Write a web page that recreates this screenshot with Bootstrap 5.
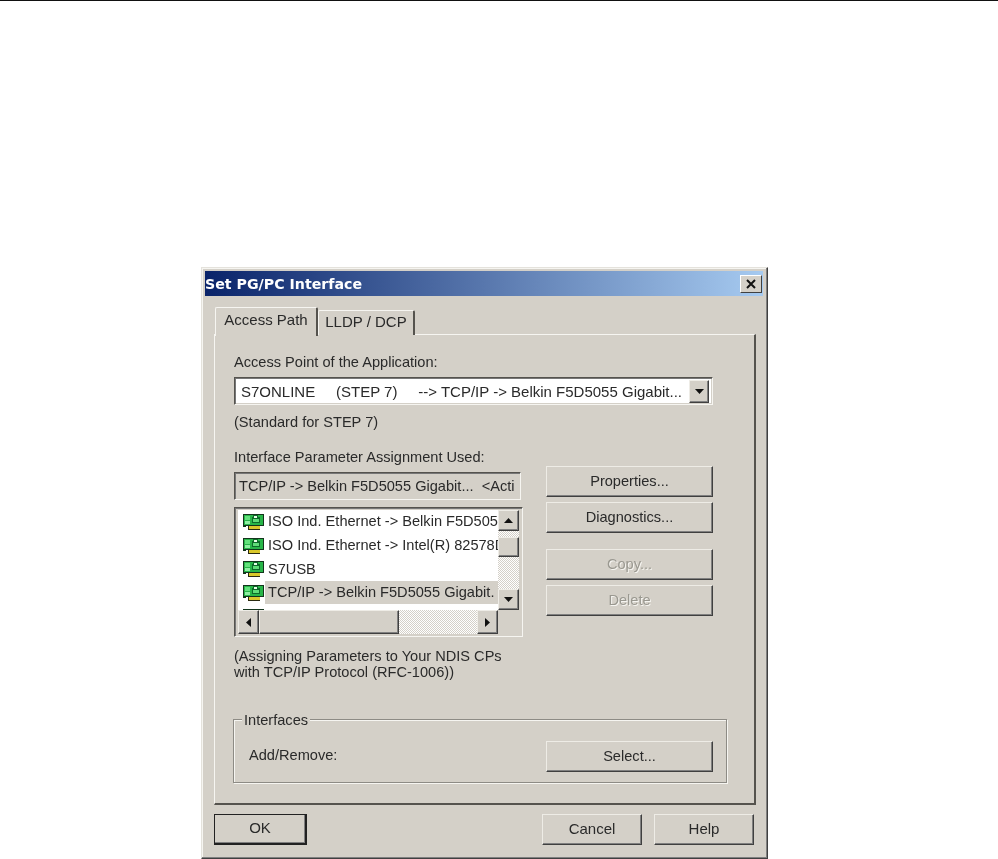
<!DOCTYPE html>
<html lang="en">
<head>
<meta charset="utf-8">
<title>Set PG/PC Interface</title>
<link rel="stylesheet" href="https://cdn.jsdelivr.net/npm/bootstrap@5.3.0/dist/css/bootstrap.min.css">
<style>
html,body{background:#fff;height:859px;overflow:hidden}
body{font-family:"Liberation Sans",Arial,sans-serif;font-size:14.6px;line-height:16px;color:#2a2a2a}
.topline{height:1px;background:#111}
.dlg{width:567px;height:592px;margin:266px 0 0 201px;background:#d4d0c8;border:1px solid #e4e2dc;border-right-color:#404040;border-bottom-color:#404040;box-shadow:inset -1px -1px 0 #808080,inset 1px 1px 0 #f6f5f1;padding:3px 3px 0 3px;filter:blur(.4px)}
.ttl{height:25px;background:linear-gradient(90deg,#0a246a,#a6caf0);color:#fff;font-weight:700;font-family:"DejaVu Sans",sans-serif;font-size:14.2px;padding-left:0;margin-right:1px}
.xbtn{width:22px;height:18px;margin-right:1px;background:#d4d0c8;color:#111;border-right:1px solid #404040;border-bottom:1px solid #404040;border-top:1px solid #fff;border-left:1px solid #fff}
.body{padding:11px 8px 0 9px}
.tabs{height:27px;padding-left:1px;font-size:15px}
.tb{border:1px solid #f6f5f1;border-bottom:0;border-right:2px solid #55534e;background:#d4d0c8;border-radius:2px 2px 0 0;text-align:center}
.tb1{width:103px;height:29px;padding-top:4px;position:relative;z-index:1}
.tb2{width:97px;height:25px;margin-top:3px;padding-top:3px}
.pane{height:471px;border:1px solid #f6f5f1;border-right:2px solid #55534e;border-bottom:2px solid #55534e;padding:19px 0 0 19px}
.lbl{height:16px;white-space:nowrap}
.gap9{margin-top:9px}
.sunk{border:1px solid #f6f5f1;border-top-color:#55534e;border-left-color:#55534e;box-shadow:inset 1px 1px 0 #777,inset -1px -1px 0 #d4d0c8}
.combo{width:479px;height:28px;margin-top:7px;background:#fff;padding:3px 2px 2px 6px;white-space:pre;font-size:15px}
.arr{width:20px;height:23px;background:#d4d0c8;margin-right:1px;margin-top:-1px}
.rz{border:1px solid #eeece6;border-right-color:#404040;border-bottom-color:#404040;box-shadow:inset -1px -1px 0 #808080;background:#d4d0c8}
.leftcol{width:288px}
.ro{width:287px;height:28px;margin-top:7px;padding-left:4px;overflow:hidden;white-space:pre}
.lst{width:289px;height:130px;margin-top:7px;padding:2px 2px 2px 3px;background:#d4d0c8}
.lst-top{height:100px}
.rows{width:260px;background:#fff;overflow:hidden}
.rw{height:23.7px;white-space:nowrap;overflow:hidden}
.rw svg{flex:none;margin:0 1px 0 5px}
.rw span{padding:0 0 0 3px;line-height:23px}
.rw.sel span{background:#d4d0c8;display:block;flex:1}
.vbar{width:21px;background:#d4d0c8;height:100px}
.sb{width:21px;height:21px;flex:none}
.dither{background-color:#fff;background-image:repeating-conic-gradient(#d4d0c8 0 25%,#fff 0 50%);background-size:2px 2px}
.trk-top{height:6px}
.vthumb{height:20px}
.hbar{height:24px}
.hb{width:21px;height:24px;flex:none}
.hthumb{width:140px}
.fix{width:22px;background:#d4d0c8}
.rightcol{margin-left:24px;width:167px;margin-top:17px}
.wbtn{display:flex;align-items:center;justify-content:center;width:167px;height:31px;padding:0 0 2px 0;background:#d4d0c8;color:#2a2a2a}
.gap5{margin-top:5px}
.gap16{margin-top:16px}
.off{color:#9a9890;text-shadow:1px 1px 0 #f6f5f1}
.notes{margin-top:11px}
.grp{width:494px;height:64px;margin-top:39px;margin-left:-1px;border:1px solid #8d8b85;box-shadow:1px 1px 0 #f6f5f1,inset 1px 1px 0 #f6f5f1;padding:21px 13px 0 15px;position:relative}
.addrem{margin-top:6px}
.legend{position:absolute;left:8px;top:-8px;background:#d4d0c8;padding:0 2px}
.foot{margin-top:9px;font-size:15px}
.okb{width:93px;height:31px;border:2px solid #222;border-left-width:1px;border-top-width:1px}
.w100{width:100px;height:31px}
.helpb{margin-left:12px;margin-right:2px}
.sec2{margin-top:19px}
</style>
</head>
<body>
<div class="topline"></div>
<div class="dlg d-flex flex-column">
  <div class="ttl d-flex align-items-center justify-content-between">
    <span>Set PG/PC Interface</span>
    <span class="xbtn d-flex align-items-center justify-content-center">
      <svg width="12" height="10" viewBox="0 0 12 10"><path d="M2 1l8 8M10 1l-8 8" stroke="#111" stroke-width="2" fill="none"/></svg>
    </span>
  </div>
  <div class="body">
    <div class="tabs d-flex">
      <div class="tb tb1">Access Path</div>
      <div class="tb tb2">LLDP / DCP</div>
    </div>
    <div class="pane">
      <div class="lbl">Access Point of the Application:</div>
      <div class="combo sunk d-flex align-items-center justify-content-between">
        <span>S7ONLINE     (STEP 7)     --&gt; TCP/IP -&gt; Belkin F5D5055 Gigabit...</span>
        <span class="arr rz d-flex align-items-center justify-content-center"><svg width="9" height="5" viewBox="0 0 9 5"><path d="M0 0h9L4.5 5z" fill="#111"/></svg></span>
      </div>
      <div class="lbl gap9">(Standard for STEP 7)</div>
      <div class="d-flex sec2">
        <div class="leftcol flex-none">
          <div class="lbl">Interface Parameter Assignment Used:</div>
          <div class="ro sunk d-flex align-items-center">TCP/IP -&gt; Belkin F5D5055 Gigabit...  &lt;Acti</div>
          <div class="lst sunk">
            <div class="lst-top d-flex">
              <div class="rows">
                <div class="rw d-flex align-items-center"><svg width="21" height="16" viewBox="0 0 21 16"><use href="#nic"/></svg><span>ISO Ind. Ethernet -&gt; Belkin F5D505</span></div>
                <div class="rw d-flex align-items-center"><svg width="21" height="16" viewBox="0 0 21 16"><use href="#nic"/></svg><span>ISO Ind. Ethernet -&gt; Intel(R) 82578D</span></div>
                <div class="rw d-flex align-items-center"><svg width="21" height="16" viewBox="0 0 21 16"><use href="#nic"/></svg><span>S7USB</span></div>
                <div class="rw sel d-flex align-items-center"><svg width="21" height="16" viewBox="0 0 21 16"><use href="#nic"/></svg><span>TCP/IP -&gt; Belkin F5D5055 Gigabit.</span></div>
                <div class="rw d-flex align-items-center"><svg width="21" height="16" viewBox="0 0 21 16"><use href="#nic"/></svg><span>TCP/IP -&gt; Intel(R) 82578DM Gigabit</span></div>
              </div>
              <div class="vbar d-flex flex-column">
                <div class="sb rz d-flex align-items-center justify-content-center"><svg width="9" height="5" viewBox="0 0 9 5"><path d="M0 5h9L4.5 0z" fill="#111"/></svg></div>
                <div class="dither trk-top"></div>
                <div class="rz vthumb"></div>
                <div class="dither flex-grow-1"></div>
                <div class="sb rz d-flex align-items-center justify-content-center"><svg width="9" height="5" viewBox="0 0 9 5"><path d="M0 0h9L4.5 5z" fill="#111"/></svg></div>
              </div>
            </div>
            <div class="hbar d-flex">
              <div class="hb rz d-flex align-items-center justify-content-center"><svg width="5" height="9" viewBox="0 0 5 9"><path d="M5 0v9L0 4.500z" fill="#111"/></svg></div>
              <div class="hthumb rz"></div>
              <div class="dither flex-grow-1"></div>
              <div class="hb rz d-flex align-items-center justify-content-center"><svg width="5" height="9" viewBox="0 0 5 9"><path d="M0 0v9L5 4.500z" fill="#111"/></svg></div>
              <div class="fix"></div>
            </div>
          </div>
        </div>
        <div class="rightcol">
          <div class="wbtn rz">Properties...</div>
          <div class="wbtn rz gap5">Diagnostics...</div>
          <div class="wbtn rz off gap16">Copy...</div>
          <div class="wbtn rz off gap5">Delete</div>
        </div>
      </div>
      <div class="notes">(Assigning Parameters to Your NDIS CPs<br>with TCP/IP Protocol (RFC-1006))</div>
      <div class="grp d-flex align-items-start justify-content-between">
        <span class="legend">Interfaces</span>
        <span class="addrem">Add/Remove:</span>
        <div class="wbtn rz">Select...</div>
      </div>
    </div>
    <div class="foot d-flex">
      <div class="wbtn rz okb">OK</div>
      <div class="wbtn rz w100 ms-auto">Cancel</div>
      <div class="wbtn rz w100 helpb">Help</div>
    </div>
  </div>
</div>
<svg width="0" height="0" class="d-block"><defs><g id="nic">
  <rect x="0.500" y="0.500" width="20" height="11" fill="#27b548" stroke="#13351c"/>
  <rect x="2" y="2" width="5" height="4" fill="#63e27c"/>
  <rect x="2" y="7" width="5" height="3" fill="#8ff0a2"/>
  <path d="M10 1h5v2h2v6H9V3h1z" fill="#0d6a2a"/>
  <rect x="11" y="2" width="3" height="2" fill="#e8ffe8"/>
  <rect x="10" y="5" width="6" height="3" fill="#5fdc78"/>
  <rect x="5" y="12" width="12" height="3" fill="#d9c72a"/>
  <path d="M5 12h1v3h11v1H5z" fill="#2a2a10"/>
  <path d="M0 12h3v1H0z" fill="#13351c"/>
</g></defs></svg>
</body>
</html>
